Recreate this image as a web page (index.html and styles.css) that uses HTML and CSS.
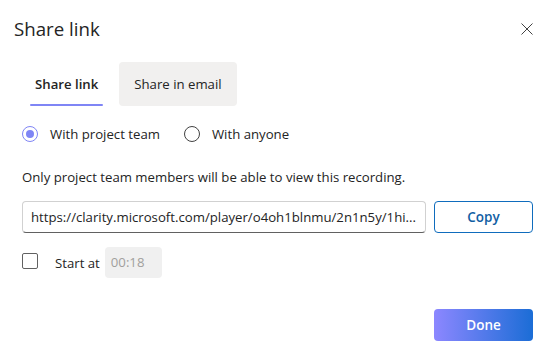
FILE: index.html
```html
<!DOCTYPE html>
<html lang="en">
<head>
  <meta charset="UTF-8" />
  <title>Share link</title>
  <link rel="stylesheet" href="styles.css">
</head>
<body>
  <div class="dialog">
    <header class="dialog-header">
      <h1 class="dialog-title">Share link</h1>
      <button class="close-btn" aria-label="Close">
        <svg width="12" height="12" viewBox="0 0 12 12">
          <path d="M0.5 0.5L11.5 11.5M11.5 0.5L0.5 11.5" stroke="#424242" stroke-width="1" fill="none"/>
        </svg>
      </button>
    </header>

    <div class="tabs">
      <button class="tab active">Share link</button>
      <button class="tab tab-alt">Share in email</button>
    </div>

    <div class="radio-group">
      <label class="radio">
        <span class="radio-circle checked"></span>
        With project team
      </label>
      <label class="radio">
        <span class="radio-circle"></span>
        With anyone
      </label>
    </div>

    <p class="note">Only project team members will be able to view this recording.</p>

    <div class="link-row">
      <div class="link-input">https://clarity.microsoft.com/player/o4oh1blnmu/2n1n5y/1hi...</div>
      <button class="btn btn-outline">Copy</button>
    </div>

    <div class="start-row">
      <span class="checkbox"></span>
      <span class="start-label">Start at</span>
      <span class="time-field">00:18</span>
    </div>

    <footer class="dialog-footer">
      <button class="btn btn-primary">Done</button>
    </footer>
  </div>
</body>
</html>
```

FILE: styles.css
```css
body {
  margin: 0;
  background: #ffffff;
  font-family: 'Open Sans', 'Noto Sans', sans-serif;
  font-size: 13.2px;
  color: #242424;
}

.dialog {
  width: 555px;
  height: 364px;
  box-sizing: border-box;
  padding: 0 22px 0 22px;
}

.dialog-header {
  display: flex;
  justify-content: space-between;
  align-items: center;
  padding-top: 15px;
  margin-left: -8px;
}

.dialog-title {
  margin: 0;
  font-size: 18.7px;
  font-weight: 400;
  line-height: 28px;
}

.close-btn {
  background: none;
  border: none;
  padding: 0;
  width: 12px;
  height: 12px;
  display: flex;
}

.tabs {
  display: flex;
  gap: 8px;
  margin-top: 19px;
}

.tab {
  font-family: inherit;
  font-size: 13.2px;
  color: #242424;
  background: none;
  border: none;
  height: 44px;
  padding: 0 13px;
  border-radius: 4px;
  position: relative;
}

.tab.active {
  font-weight: 600;
}

.tab.active::after {
  content: '';
  position: absolute;
  left: 8px;
  right: 8px;
  bottom: 0;
  height: 2px;
  border-radius: 1px;
  background: #7f85f5;
}

.tab-alt {
  background: #f1f0ef;
  padding: 0 15px;
}

.radio-group {
  display: flex;
  gap: 24px;
  margin-top: 16px;
  height: 24px;
  align-items: center;
}

.radio {
  display: flex;
  align-items: center;
  gap: 12px;
}

.radio-circle {
  width: 16px;
  height: 16px;
  box-sizing: border-box;
  border: 1px solid #424242;
  border-radius: 50%;
  position: relative;
}

.radio-circle.checked {
  border-color: #7f85f5;
}

.radio-circle.checked::after {
  content: '';
  position: absolute;
  inset: 3px;
  border-radius: 50%;
  background: #7f85f5;
}

.note {
  margin: 21px 0 0;
  line-height: 20px;
}

.link-row {
  display: flex;
  gap: 8px;
  margin-top: 14px;
}

.link-input {
  flex: 1;
  min-width: 0;
  height: 32px;
  box-sizing: border-box;
  border: 1px solid #d1d1d1;
  border-bottom-color: #616161;
  border-radius: 4px;
  padding: 0 8px;
  line-height: 30px;
  white-space: nowrap;
  overflow: hidden;
  text-overflow: ellipsis;
}

.btn {
  font-family: inherit;
  font-size: 13.5px;
  font-weight: 600;
  width: 99px;
  height: 32px;
  border-radius: 4px;
  box-sizing: border-box;
}

.btn-outline {
  background: #ffffff;
  border: 1px solid #0f6cbd;
  color: #115ea3;
}

.btn-primary {
  border: none;
  color: #ffffff;
  background: linear-gradient(to right, #8c87ff, #1b6dd6);
}

.start-row {
  display: flex;
  align-items: center;
  margin-top: 14px;
  height: 31px;
}

.checkbox {
  width: 16px;
  height: 16px;
  box-sizing: border-box;
  border: 1px solid #616161;
  border-radius: 2px;
  margin-top: -3px;
}

.start-label {
  margin-left: 17px;
}

.time-field {
  margin-left: 5px;
  width: 57px;
  height: 31px;
  box-sizing: border-box;
  padding-left: 6px;
  line-height: 31px;
  background: #f0f0f0;
  color: #a19f9d;
  border-radius: 4px;
}

.dialog-footer {
  display: flex;
  justify-content: flex-end;
  margin-top: 31px;
}
```
